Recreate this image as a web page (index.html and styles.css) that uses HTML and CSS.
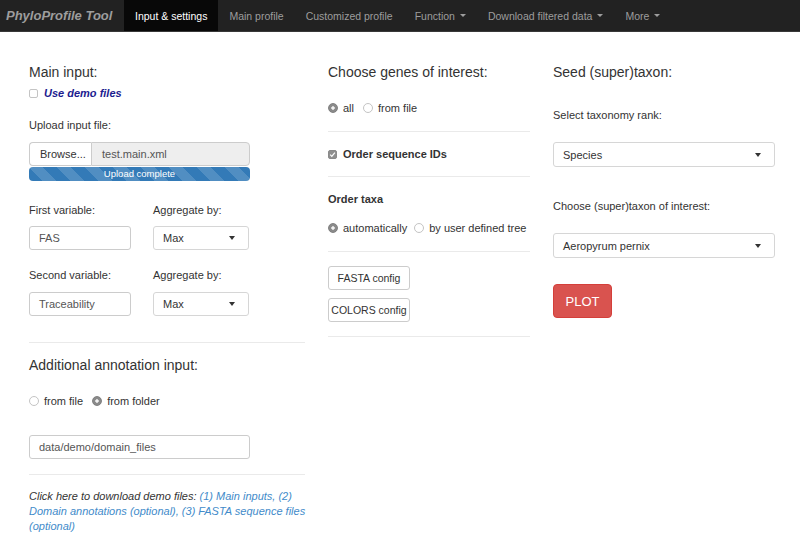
FILE: index.html
```html
<!DOCTYPE html>
<html>
<head>
<meta charset="utf-8">
<title>PhyloProfile</title>
<link rel="stylesheet" href="styles.css">
</head>
<body>
<nav class="navbar">
  <span class="brand">PhyloProfile Tool</span>
  <ul class="nav">
    <li class="active">Input &amp; settings</li>
    <li>Main profile</li>
    <li>Customized profile</li>
    <li>Function<span class="caret"></span></li>
    <li>Download filtered data<span class="caret"></span></li>
    <li>More<span class="caret"></span></li>
  </ul>
</nav>

<main class="page">
  <section class="col">
    <h4 class="h4">Main input:</h4>
    <div class="check demo-check"><span class="box"></span><span class="demo">Use demo files</span></div>

    <div class="lbl upload-lbl">Upload input file:</div>
    <div class="file">
      <span class="browse">Browse...</span>
      <span class="fname">test.main.xml</span>
    </div>
    <div class="progress">Upload complete</div>

    <div class="pair pair-1">
      <div>
        <div class="lbl">First variable:</div>
        <div class="txt">FAS</div>
      </div>
      <div>
        <div class="lbl">Aggregate by:</div>
        <div class="sel">Max<span class="sel-caret"></span></div>
      </div>
    </div>
    <div class="pair pair-2">
      <div>
        <div class="lbl">Second variable:</div>
        <div class="txt">Traceability</div>
      </div>
      <div>
        <div class="lbl">Aggregate by:</div>
        <div class="sel">Max<span class="sel-caret"></span></div>
      </div>
    </div>

    <hr class="rule rule-a">
    <h4 class="h4 annot-h">Additional annotation input:</h4>
    <div class="radios annot-radios">
      <span class="radio"></span><span class="opt">from file</span>
      <span class="radio on"></span><span class="opt">from folder</span>
    </div>
    <div class="txt folder">data/demo/domain_files</div>
    <hr class="rule rule-b">
    <div class="note">
      <div class="note-line">Click here to download demo files: <a>(1) Main inputs, (2)</a></div>
      <div class="note-line"><a>Domain annotations (optional), (3) FASTA sequence files</a></div>
      <div class="note-line"><a>(optional)</a></div>
    </div>
  </section>

  <section class="col">
    <h4 class="h4">Choose genes of interest:</h4>
    <div class="radios genes-radios">
      <span class="radio on"></span><span class="opt">all</span>
      <span class="radio"></span><span class="opt">from file</span>
    </div>
    <hr class="rule m15">
    <div class="check order-check"><span class="box on"><svg viewBox="0 0 9 9" width="9" height="9"><path d="M2.2 4.7 L3.8 6.3 L6.9 2.6" fill="none" stroke="#fff" stroke-width="1.2"/></svg></span><span class="bold">Order sequence IDs</span></div>
    <hr class="rule m14">
    <div class="lbl bold taxa-lbl">Order taxa</div>
    <div class="radios taxa-radios">
      <span class="radio on"></span><span class="opt">automatically</span>
      <span class="radio"></span><span class="opt">by user defined tree</span>
    </div>
    <hr class="rule m15">
    <button class="btn fasta">FASTA config</button>
    <button class="btn colors">COLORS config</button>
    <hr class="rule m14">
  </section>

  <section class="col">
    <h4 class="h4">Seed (super)taxon:</h4>
    <div class="lbl rank-lbl">Select taxonomy rank:</div>
    <div class="sel wide">Species<span class="sel-caret"></span></div>
    <div class="lbl taxon-lbl">Choose (super)taxon of interest:</div>
    <div class="sel wide">Aeropyrum pernix<span class="sel-caret"></span></div>
    <button class="plot">PLOT</button>
  </section>
</main>
</body>
</html>
```

FILE: styles.css
```css
html, body {
  margin: 0;
  padding: 0;
  background: #fff;
}
body {
  font-family: "Liberation Sans", Arial, Helvetica, sans-serif;
  font-size: 11px;
  color: #333;
  overflow: hidden;
}

/* Navbar */
.navbar {
  display: flex;
  height: 31px;
  background: #222;
  border-bottom: 1px solid #383838;
}
.brand {
  width: 118px;
  padding-left: 6px;
  display: flex;
  align-items: center;
  font-size: 13px;
  font-weight: bold;
  font-style: italic;
  color: #9d9d9d;
}
.nav {
  display: flex;
  margin: 0;
  padding: 0;
  list-style: none;
}
.nav li {
  display: flex;
  align-items: center;
  padding: 0 11px;
  font-size: 10.5px;
  color: #9d9d9d;
  white-space: nowrap;
}
.nav li.active {
  background: #080808;
  color: #fff;
}
.caret {
  display: inline-block;
  margin-left: 5px;
  width: 0;
  height: 0;
  border-top: 3.5px solid #9d9d9d;
  border-left: 3.5px solid transparent;
  border-right: 3.5px solid transparent;
}

/* Page grid */
.page {
  display: grid;
  grid-template-columns: 276px 202px 222px;
  column-gap: 23px;
  padding: 32px 0 0 29px;
  align-items: start;
}
.col {
  display: flex;
  flex-direction: column;
  align-items: stretch;
}

.h4 {
  margin: 0;
  font-size: 14px;
  line-height: 16px;
  font-weight: normal;
  color: #333;
}
.lbl {
  font-size: 11px;
  line-height: 14px;
  color: #333;
}
.bold { font-weight: bold; }

/* Checkbox */
.check {
  display: flex;
  align-items: center;
  height: 16px;
  gap: 6px;
}
.box {
  box-sizing: border-box;
  width: 9px;
  height: 9px;
  border: 1px solid #c4c4c4;
  border-radius: 2px;
  background: #fff;
  display: flex;
}
.box.on {
  background: #8f8f8f;
  border-color: #8a8a8a;
}
.box.on svg { margin: -1px; }
.demo {
  color: #1c1c8f;
  font-weight: bold;
  font-style: italic;
}
.demo-check { margin-top: 5px; }

/* Radios */
.radios {
  display: flex;
  align-items: center;
  height: 16px;
  white-space: nowrap;
}
.radio {
  flex: none;
  box-sizing: border-box;
  width: 10px;
  height: 10px;
  border-radius: 50%;
  border: 1px solid #c4c4c4;
  background: #fff;
  margin-right: 5px;
}
.radio.on {
  border-color: #808080;
  background: radial-gradient(circle, #f2f2f2 0 1.4px, #8a8a8a 2px);
}
.opt { margin-right: 9px; }

/* File input */
.upload-lbl { margin-top: 17px; }
.file {
  display: flex;
  height: 24px;
  margin-top: 10px;
  width: 221px;
}
.browse {
  box-sizing: border-box;
  width: 62px;
  display: flex;
  align-items: center;
  padding-left: 10px;
  border: 1px solid #ccc;
  border-right: none;
  border-radius: 4px 0 0 4px;
  background: #fff;
  color: #333;
}
.fname {
  flex: 1;
  display: flex;
  align-items: center;
  padding-left: 10px;
  background: #eee;
  border: 1px solid #ccc;
  border-radius: 0 4px 4px 0;
  color: #555;
}
.progress {
  width: 221px;
  height: 14px;
  margin-top: 1px;
  border-radius: 4px;
  background-color: #337ab7;
  background-image: linear-gradient(45deg, rgba(255,255,255,.15) 25%, transparent 25%, transparent 50%, rgba(255,255,255,.15) 50%, rgba(255,255,255,.15) 75%, transparent 75%, transparent);
  background-size: 28px 28px;
  color: #fff;
  font-size: 9.5px;
  line-height: 14px;
  text-align: center;
}

/* Variable pairs */
.pair {
  display: grid;
  grid-template-columns: 102px 96px;
  column-gap: 22px;
}
.pair .lbl { margin-bottom: 9px; }
.pair-1 { margin-top: 22px; }
.pair-2 { margin-top: 18px; }
.pair-2 .lbl { margin-bottom: 10px; }

.txt {
  box-sizing: border-box;
  height: 24px;
  display: flex;
  align-items: center;
  padding-left: 9px;
  border: 1px solid #ccc;
  border-radius: 3px;
  color: #555;
  background: #fff;
}
.sel {
  box-sizing: border-box;
  height: 24px;
  display: flex;
  align-items: center;
  justify-content: space-between;
  padding: 0 13px 0 9px;
  border: 1px solid #d6d6d6;
  border-radius: 3px;
  color: #333;
  background: #fff;
}
.sel-caret {
  width: 0;
  height: 0;
  border-top: 4px solid #333;
  border-left: 3.5px solid transparent;
  border-right: 3.5px solid transparent;
}
.sel.wide { height: 25px; }

/* Rules */
.rule {
  margin: 0;
  border: 0;
  border-top: 1px solid #eaeaea;
  height: 0;
}
.rule-a { margin-top: 26px; }
.annot-h { margin-top: 14px; }
.annot-radios { margin-top: 20px; }
.folder { margin-top: 26px; width: 221px; }
.rule-b { margin-top: 15px; }
.note {
  margin-top: 14px;
  font-style: italic;
  line-height: 15px;
  color: #333;
}
.note-line { white-space: nowrap; }
.note a { color: #428bca; }

/* Middle column */
.genes-radios { margin-top: 20px; }
.m15 { margin-top: 15px; }
.m14 { margin-top: 14px; }
.order-check { margin-top: 14px; }
.taxa-lbl { margin-top: 15px; }
.taxa-radios { margin-top: 14px; }
.taxa-radios .opt { margin-right: 7px; }
.btn {
  box-sizing: border-box;
  width: 82px;
  height: 24px;
  padding: 0;
  border: 1px solid #ccc;
  border-radius: 3px;
  background: #fff;
  font-family: inherit;
  font-size: 10.5px;
  color: #333;
  text-align: center;
  white-space: nowrap;
}
.fasta { margin-top: 14px; }
.colors { margin-top: 8px; }

/* Right column */
.rank-lbl { margin-top: 28px; }
.rank-lbl + .sel { margin-top: 20px; }
.taxon-lbl { margin-top: 32px; }
.taxon-lbl + .sel { margin-top: 20px; }
.plot {
  box-sizing: border-box;
  margin-top: 26px;
  width: 59px;
  height: 34px;
  padding: 0;
  border: 1px solid #d43f3a;
  border-radius: 4px;
  background: #d9534f;
  color: #fff;
  font-family: inherit;
  font-size: 13px;
}
```
